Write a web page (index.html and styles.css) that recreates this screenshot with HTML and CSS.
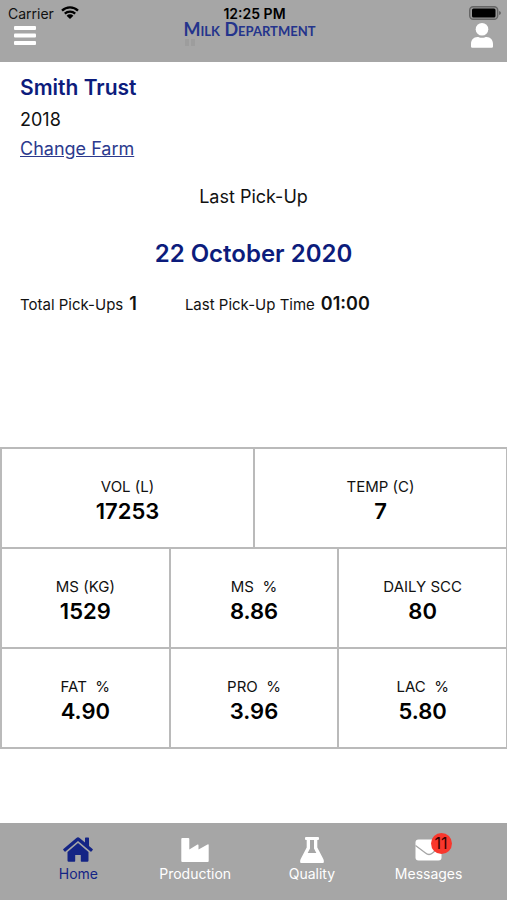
FILE: index.html
```html
<!DOCTYPE html>
<html lang="en">
<head>
<meta charset="utf-8">
<meta name="viewport" content="width=device-width, initial-scale=1">
<title>Milk Department</title>
<link rel="stylesheet" href="styles.css">
</head>
<body>
<header class="topbar">
  <div class="topbar-side">
    <div class="status">
      <span>Carrier</span>
      <svg class="wifi" viewBox="0 0 18 13" aria-hidden="true">
        <path d="M1 4.6a11.6 11.6 0 0 1 16 0M3.8 7.6a7.6 7.6 0 0 1 10.4 0" fill="none" stroke="#000" stroke-width="2.3"/>
        <path d="M9 13 5.6 9.7a4.9 4.9 0 0 1 6.8 0z"/>
      </svg>
    </div>
    <button class="icon-button menu" aria-label="Menu">
      <svg viewBox="0 0 22 19" fill="#fff"><rect width="22" height="4" rx="1"/><rect y="7.5" width="22" height="4" rx="1"/><rect y="15" width="22" height="4" rx="1"/></svg>
    </button>
  </div>
  <div class="topbar-center">
    <div class="time">12:25 PM</div>
    <h1 class="brand">Milk Department</h1>
    <svg class="brand-mark" viewBox="0 0 12 9" aria-hidden="true"><path d="M1 1h4v7H1zM7 1h4v7H7z" fill="#9d9d9d"/></svg>
  </div>
  <div class="topbar-side topbar-end">
    <svg class="battery" viewBox="0 0 32 14" aria-hidden="true">
      <rect x=".7" y=".7" width="28" height="12.6" rx="3.5" fill="#999" stroke="#666" stroke-width="1.4"/>
      <rect x="3" y="2.5" width="23.5" height="9" rx="1.5"/>
      <path d="M30 5q2 .6 2 2t-2 2z" fill="#666"/>
    </svg>
    <button class="icon-button account" aria-label="Account">
      <svg viewBox="0 0 22 25" fill="#fff"><circle cx="11" cy="6.3" r="6.3"/><path d="M0 23.500v-2.500c0-4 2.500-7 6.500-7 1.300 0 2.300.8 4.500.8s3.200-.8 4.500-.8c4 0 6.500 3 6.500 7v2.500q0 1.300-1.300 1.300H1.300Q0 24.800 0 23.500z"/></svg>
    </button>
  </div>
</header>

<main class="content">
  <section class="farm">
    <h2 class="farm-name">Smith Trust</h2>
    <p class="farm-id">2018</p>
    <a class="farm-link" href="#farms">Change Farm</a>
  </section>

  <section class="pickup">
    <h3 class="pickup-label">Last Pick-Up</h3>
    <p class="pickup-date">22 October 2020</p>
    <dl class="pickup-facts">
      <div class="fact"><dt>Total Pick-Ups</dt><dd>1</dd></div>
      <div class="fact"><dt>Last Pick-Up Time</dt><dd>01:00</dd></div>
    </dl>
  </section>

  <dl class="metrics">
    <div class="metric wide"><dt>VOL (L)</dt><dd>17253</dd></div>
    <div class="metric wide"><dt>TEMP (C)</dt><dd>7</dd></div>
    <div class="metric"><dt>MS (KG)</dt><dd>1529</dd></div>
    <div class="metric"><dt>MS&nbsp; %</dt><dd>8.86</dd></div>
    <div class="metric"><dt>DAILY SCC</dt><dd>80</dd></div>
    <div class="metric"><dt>FAT&nbsp; %</dt><dd>4.90</dd></div>
    <div class="metric"><dt>PRO&nbsp; %</dt><dd>3.96</dd></div>
    <div class="metric"><dt>LAC&nbsp; %</dt><dd>5.80</dd></div>
  </dl>
</main>

<nav class="tabs">
  <a class="tab active" href="#home">
    <svg viewBox="0 0 30 26" fill="currentColor"><path d="M13.400 1q1.600-1.300 3.200 0L22 5.600V1.200q0-.7.700-.7h2.600q.7 0 .7.700V9l3.600 3q.5.400.1.900l-1.300 1.600q-.4.500-.9.100L15 3.900 2.500 14.600q-.5.400-.9-.1L.3 12.900q-.4-.5.100-.9z"/><path d="M15 6 25.500 15v8.500q0 1.200-1.200 1.200H18.500q-.7 0-.7-.7V18h-5.600v6q0 .7-.7.7H5.700q-1.200 0-1.200-1.200V15z"/></svg>
    <span>Home</span>
  </a>
  <a class="tab" href="#production">
    <svg viewBox="0 0 30 26" fill="currentColor"><path d="M2.300 1h6q1 0 1 1v10.500L17.500 7.600q1-.5 1 .6v4.300l9-5q1.200-.6 1.200.6V24q0 1-1 1H2.300q-1 0-1-1V2q0-1 1-1z"/></svg>
    <span>Production</span>
  </a>
  <a class="tab" href="#quality">
    <svg viewBox="0 0 30 26" fill="currentColor" fill-rule="evenodd"><path d="M9 0h12q1 0 1 1v1q0 1-1 1H20.300v7.500l6 11.500q1.800 4.500-2 4.500H5.700q-3.800 0-2-4.500L9.700 10.500V3H9q-1 0-1-1V1q0-1 1-1zM13 3v8.500L10.700 16h8.600L17 11.500V3z"/></svg>
    <span>Quality</span>
  </a>
  <a class="tab" href="#messages">
    <svg viewBox="0 0 30 26" fill="currentColor"><path d="M4.500 2.500h20q3 0 3 3v15q0 3-3 3h-20q-3 0-3-3v-15q0-3 3-3z"/><path d="M1.500 8.500 11.500 16q3.500 3 7 0l9-7.500" fill="none" stroke="#a6a6a6" stroke-width="1.300"/></svg>
    <span>Messages</span>
    <b class="badge">11</b>
  </a>
</nav>
</body>
</html>
```
FILE: styles.css
```css
* { box-sizing: border-box; margin: 0; }

:root {
  --gray: #a6a6a6;
  --navy: #0c1c7c;
}

body {
  display: flex;
  flex-direction: column;
  min-height: 100vh;
  background: #fff;
  color: #111;
  font-family: Inter, "Liberation Sans", sans-serif;
}

.topbar {
  display: grid;
  grid-template-columns: 1fr auto 1fr;
  height: 62px;
  padding: 6px 6px 0 8px;
  background: var(--gray);
  font-size: 14px;
  line-height: 16px;
}

.topbar-side {
  display: flex;
  flex-direction: column;
  align-items: flex-start;
}
.topbar-end { align-items: flex-end; }
.topbar-center {
  display: flex;
  flex-direction: column;
  align-items: center;
}

.status { display: flex; gap: 7px; }
.wifi { width: 18px; height: 13px; }

.icon-button {
  display: block;
  padding: 0;
  border: 0;
  background: none;
}
.icon-button svg { display: block; width: 22px; }
.menu { margin: 4px 6px 0; }
.account { margin: 3px 8px 0; }
.battery { width: 32px; height: 14px; }

.time { color: #000; font-weight: 600; }

.brand {
  margin-right: 10px;
  color: #24348c;
  font-family: Lato, "Liberation Sans", sans-serif;
  font-size: 18px;
  font-variant: small-caps;
  font-weight: 700;
  line-height: 14px;
}
.brand-mark {
  align-self: flex-start;
  width: 12px;
  height: 9px;
  margin-top: 2px;
}

.content {
  display: flex;
  flex: 1;
  flex-direction: column;
}

.farm { padding: 12px 20px 0; }
.farm-name {
  color: var(--navy);
  font-size: 21px;
  font-weight: 600;
  line-height: 28px;
}
.farm-id, .farm-link, .pickup-label {
  font-size: 18px;
  font-weight: 400;
  line-height: 24px;
}
.farm-id { margin: 6px 0 5px; }
.farm-link { display: inline-block; color: #2c3a8e; }

.pickup { padding: 24px 20px 0; text-align: center; }
.pickup-date {
  margin-top: 27px;
  color: var(--navy);
  font-size: 24px;
  font-weight: 600;
  line-height: 36px;
}
.pickup-facts {
  display: flex;
  gap: 48px;
  margin-top: 20px;
}
.fact {
  display: flex;
  align-items: baseline;
  gap: 6px;
  line-height: 24px;
}
.fact dt { font-size: 15px; }
.fact dd { font-size: 18px; font-weight: 600; }

.metrics {
  display: grid;
  grid-template-columns: repeat(6, 1fr);
  grid-auto-rows: 98px;
  gap: 2px;
  margin: auto 0 74px;
  padding: 2px 1px 2px 2px;
  background: #bababa;
}
.metric {
  display: flex;
  flex-direction: column;
  grid-column: span 2;
  align-items: center;
  justify-content: center;
  padding-top: 4px;
  background: #fff;
}
.wide { grid-column: span 3; }
.metric dt {
  font-size: 15px;
  line-height: 22px;
}
.metric dd {
  color: #000;
  font-size: 22px;
  font-weight: 600;
  line-height: 26px;
}

.tabs {
  display: grid;
  grid-template-columns: repeat(4, 1fr);
  height: 77px;
  padding: 14px 20px 0;
  background: var(--gray);
}
.tab {
  position: relative;
  display: flex;
  flex-direction: column;
  align-items: center;
  color: #fff;
  font-size: 14px;
  line-height: 22px;
  text-decoration: none;
}
.tab svg { width: 30px; height: 26px; }
.tab.active { color: #142485; }
.badge {
  position: absolute;
  top: -4px;
  left: calc(50% + 2px);
  width: 21px;
  height: 21px;
  border-radius: 50%;
  background: #f8372d;
  color: #300;
  font-size: 16px;
  font-weight: 400;
  line-height: 21px;
  text-align: center;
}
```
